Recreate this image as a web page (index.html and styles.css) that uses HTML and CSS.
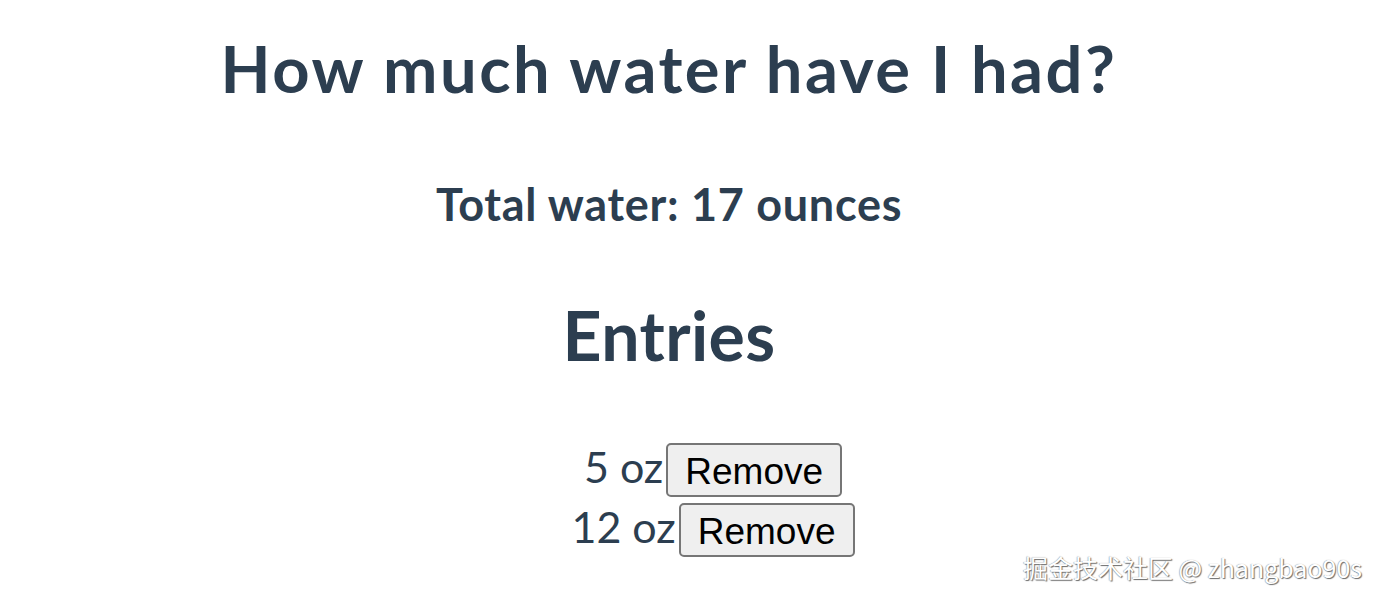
FILE: index.html
```html
<!DOCTYPE html>
<html lang="en">
<head>
<meta charset="utf-8">
<title>How much water have I had?</title>
<link rel="stylesheet" href="styles.css">
</head>
<body>
<div class="app">
  <h1 class="title">How much water have I had?</h1>
  <h3 class="total">Total water: 17 ounces</h3>
  <h2 class="entries-title">Entries</h2>
  <ul class="entries">
    <li class="entry"><span class="amount">5 oz</span><button class="remove">Remove</button></li>
    <li class="entry"><span class="amount">12 oz</span><button class="remove">Remove</button></li>
  </ul>
</div>
<div class="watermark">掘金技术社区 @ zhangbao90s</div>
</body>
</html>
```
FILE: styles.css
```css
html, body {
  margin: 0;
  padding: 0;
  background: #ffffff;
}
body {
  width: 1380px;
  height: 602px;
  overflow: hidden;
  position: relative;
}
.app {
  font-family: Lato, "Open Sans", sans-serif;
  color: #2c3e50;
  text-align: center;
  padding: 36px 42px 0 0;
  display: flex;
  flex-direction: column;
  align-items: stretch;
}
.title {
  margin: 0;
  font-size: 65px;
  line-height: 1;
  font-weight: 700;
  letter-spacing: 2.5px;
}
.total {
  margin: 81px 0 0;
  font-size: 45px;
  line-height: 1;
  font-weight: 700;
  letter-spacing: 0.7px;
}
.entries-title {
  margin: 74px 0 0;
  font-size: 68px;
  line-height: 1;
  font-weight: 700;
  letter-spacing: 0.4px;
}
.entries {
  list-style: none;
  margin: 74px 0 0;
  padding: 0 0 0 88px;
  display: flex;
  flex-direction: column;
  gap: 6px;
}
.entry {
  display: flex;
  justify-content: center;
  align-items: center;
  height: 54px;
}
.amount {
  font-size: 43px;
  line-height: 1;
  font-weight: 400;
  color: #2c3e50;
  padding-bottom: 8px;
}
.remove {
  font-family: "Liberation Sans", Arial, sans-serif;
  font-size: 37px;
  line-height: 1;
  color: #000;
  background: #efefef;
  border: 2px solid #767676;
  border-radius: 5px;
  height: 54px;
  padding: 2px 17px 0;
  box-sizing: border-box;
  margin-left: 3px;
}
.watermark {
  position: absolute;
  right: 18px;
  bottom: 20px;
  font-family: "Noto Sans CJK SC", "Open Sans", sans-serif;
  font-size: 25px;
  line-height: 1.2;
  color: #ffffff;
  text-shadow: 1px 1px 1px #6a6a6a, -0.5px -0.5px 1px #9a9a9a;
  white-space: nowrap;
}
```
